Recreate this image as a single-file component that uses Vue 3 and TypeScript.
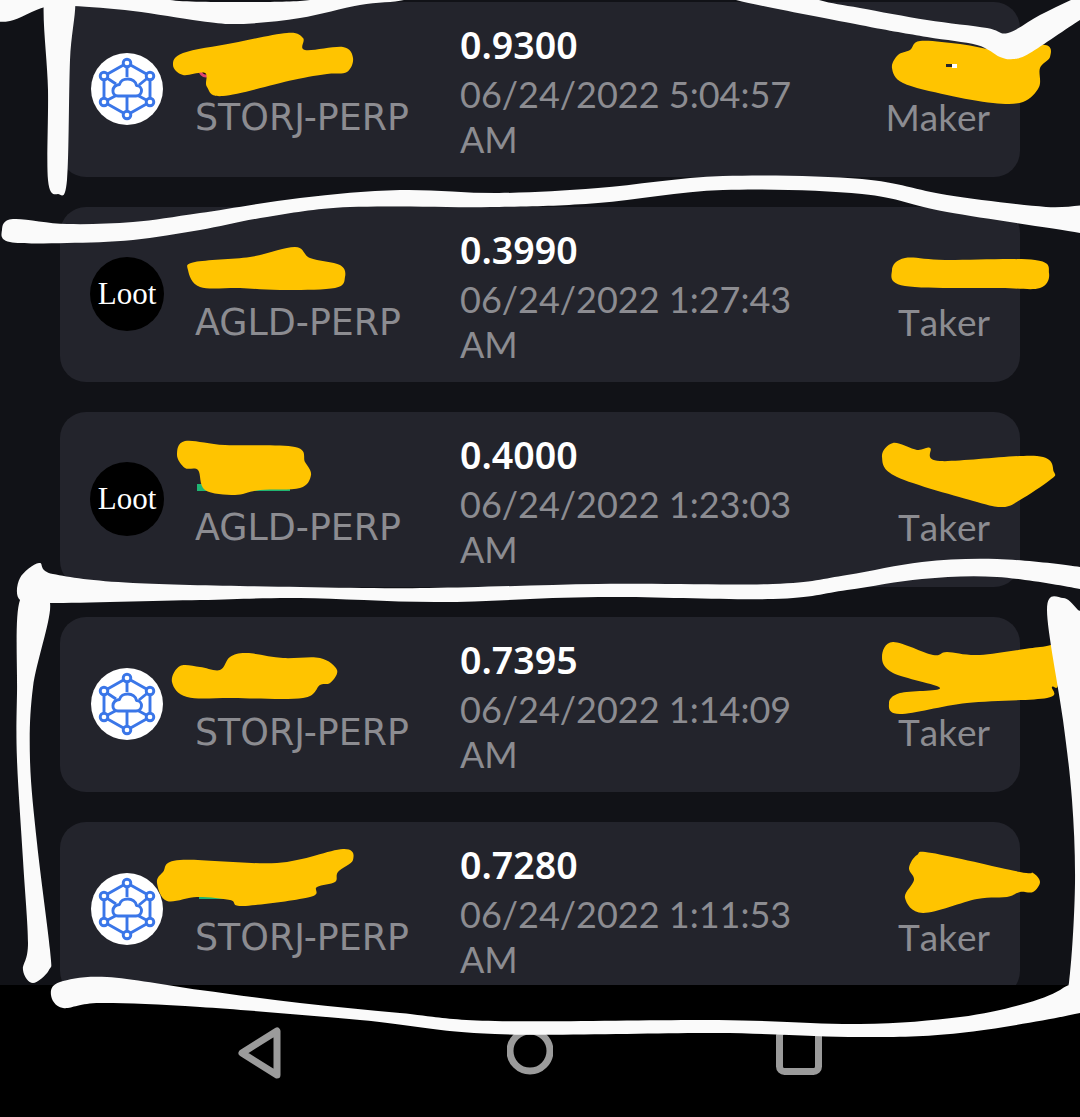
<script setup lang="ts">
type Pt = [number, number];

interface Trade {
  price: string;
  time: string;
  symbol: string;
  role: string;
  logo: 'storj' | 'loot';
}

const trades: Trade[] = [
  { price: '0.9300', time: '06/24/2022 5:04:57 AM', symbol: 'STORJ-PERP', role: 'Maker', logo: 'storj' },
  { price: '0.3990', time: '06/24/2022 1:27:43 AM', symbol: 'AGLD-PERP', role: 'Taker', logo: 'loot' },
  { price: '0.4000', time: '06/24/2022 1:23:03 AM', symbol: 'AGLD-PERP', role: 'Taker', logo: 'loot' },
  { price: '0.7395', time: '06/24/2022 1:14:09 AM', symbol: 'STORJ-PERP', role: 'Taker', logo: 'storj' },
  { price: '0.7280', time: '06/24/2022 1:11:53 AM', symbol: 'STORJ-PERP', role: 'Taker', logo: 'storj' },
];

const nodes: Pt[] = [[0, -26], [23, -13], [23, 13], [0, 26], [-23, 13], [-23, -13]];

// closed catmull-rom through the outline points
function smooth(pts: Pt[]): string {
  const n = pts.length;
  let d = `M${pts[0][0]} ${pts[0][1]}`;
  for (let i = 0; i < n; i++) {
    const p0 = pts[(i - 1 + n) % n];
    const p1 = pts[i];
    const p2 = pts[(i + 1) % n];
    const p3 = pts[(i + 2) % n];
    const c1x = p1[0] + (p2[0] - p0[0]) / 6;
    const c1y = p1[1] + (p2[1] - p0[1]) / 6;
    const c2x = p2[0] - (p3[0] - p1[0]) / 6;
    const c2y = p2[1] - (p3[1] - p1[1]) / 6;
    d += `C${c1x.toFixed(1)} ${c1y.toFixed(1)} ${c2x.toFixed(1)} ${c2y.toFixed(1)} ${p2[0]} ${p2[1]}`;
  }
  return d + 'Z';
}

const yellow: Pt[][] = [
  [[173, 65], [183, 53], [233, 43], [287, 33], [303, 38], [305, 50], [343, 47], [353, 58], [347, 72], [327, 74], [293, 80], [223, 96], [207, 87], [205, 73], [183, 75]],
  [[188, 270], [195, 262], [250, 257], [295, 247], [310, 258], [340, 265], [345, 277], [335, 288], [280, 290], [240, 288], [200, 287]],
  [[177, 455], [185, 441], [225, 445], [295, 447], [305, 462], [311, 475], [300, 488], [260, 490], [235, 495], [205, 490], [198, 470], [185, 468]],
  [[172, 682], [180, 666], [200, 667], [220, 670], [230, 657], [247, 653], [283, 658], [320, 658], [337, 670], [330, 683], [320, 685], [303, 698], [233, 698], [187, 697]],
  [[157, 883], [163, 872], [180, 860], [277, 863], [343, 849], [353, 860], [338, 872], [335, 882], [317, 887], [310, 897], [243, 906], [230, 900], [197, 897], [167, 901]],
  [[892, 68], [898, 55], [910, 50], [920, 41], [960, 44], [1000, 50], [1045, 45], [1050, 57], [1040, 68], [1039, 87], [1023, 102], [993, 103], [947, 95], [903, 83]],
  [[892, 270], [905, 258], [945, 260], [1035, 260], [1049, 273], [1040, 288], [1000, 288], [905, 286]],
  [[882, 457], [893, 443], [917, 450], [930, 448], [940, 461], [1037, 456], [1054, 472], [1050, 480], [1020, 500], [1003, 507], [977, 502], [897, 477]],
  [[882, 657], [893, 642], [933, 655], [947, 652], [980, 655], [1040, 647], [1060, 647], [1058, 685], [1052, 687], [1047, 698], [967, 703], [900, 714], [889, 703], [900, 693], [940, 688], [893, 673]],
  [[909, 868], [917, 855], [932, 853], [1020, 872], [1033, 873], [1040, 882], [1033, 892], [1020, 892], [1007, 897], [977, 899], [923, 913], [905, 898], [914, 880]],
];

const white: Pt[][] = [
  [[-10, -10], [165, -10], [170, 0], [240, 2], [310, 0], [315, -10], [420, -10], [404, 0], [360, 5], [300, 18], [240, 24], [200, 21], [133, 11], [73, 6], [45, 7], [10, 21], [-10, 17]],
  [[45, -5], [74, -5], [70, 60], [67, 180], [58, 194], [48, 180], [48, 90]],
  [[780, -15], [819, 0], [860, 8], [927, 20], [987, 28], [1008, 33], [1040, 15], [1075, -2], [1100, -15], [1100, 10], [1080, 20], [1030, 53], [1013, 59], [1000, 57], [977, 45], [927, 37], [860, 25], [736, 0], [700, -15]],
  [[2, 230], [13, 219], [67, 224], [133, 222], [200, 213], [300, 198], [400, 190], [499, 193], [598, 188], [723, 176], [862, 179], [947, 195], [1046, 207], [1100, 207], [1100, 240], [1080, 233], [947, 212], [862, 194], [723, 190], [598, 203], [499, 207], [350, 207], [267, 217], [200, 230], [133, 240], [67, 243], [10, 242]],
  [[20, 578], [39, 563], [53, 574], [133, 583], [300, 587], [429, 588], [598, 584], [773, 584], [847, 575], [922, 562], [997, 559], [1080, 567], [1100, 575], [1100, 597], [1080, 589], [997, 577], [922, 579], [847, 590], [773, 599], [598, 597], [439, 602], [300, 598], [200, 600], [50, 603], [20, 600]],
  [[20, 600], [17, 693], [17, 760], [23, 860], [28, 943], [23, 970], [33, 983], [49, 970], [50, 950], [37, 843], [30, 760], [33, 687], [50, 603]],
  [[51, 995], [60, 982], [107, 977], [200, 990], [300, 1003], [400, 1013], [495, 1021], [718, 1020], [860, 1024], [960, 1017], [1027, 1003], [1063, 988], [1070, 973], [1075, 883], [1072, 800], [1063, 720], [1047, 610], [1063, 598], [1078, 610], [1100, 640], [1110, 1000], [1080, 1013], [960, 1033], [860, 1037], [718, 1033], [495, 1034], [360, 1020], [200, 1007], [100, 1003], [63, 1008]],
];

const yellowPaths = yellow.map(smooth);
const whitePaths = white.map(smooth);
</script>

<template>
  <div class="screen">
    <div class="list">
      <div v-for="t in trades" :key="t.time" class="card">
        <div class="logo" :class="t.logo">
          <svg v-if="t.logo === 'storj'" viewBox="-36 -36 72 72" width="72" height="72">
            <g fill="none" stroke="#3a76e8" stroke-width="2.9" stroke-linejoin="round">
              <path d="M0 -26L23 -13V13L0 26L-23 13V-13Z" />
              <path d="M0 -26V-12M-23 -13L-11 -5M23 -13L12 -4M0 26V6M-23 13L-10 6M23 13L10 6" />
              <path fill="#fff" d="M-9 7H9C16 7 16.5 -3 9.5 -3.5C8 -12 -6 -12 -7.5 -4.5C-16 -3.5 -16 7 -9 7Z" />
              <circle v-for="(p, i) in nodes" :key="i" :cx="p[0]" :cy="p[1]" r="3.8" fill="#fff" />
            </g>
          </svg>
          <span v-else>Loot</span>
        </div>
        <div class="symbol">{{ t.symbol }}</div>
        <div class="info">
          <div class="price">{{ t.price }}</div>
          <div class="time">{{ t.time }}</div>
        </div>
        <div class="role">{{ t.role }}</div>
      </div>
    </div>

    <div class="navbar">
      <svg width="46" height="52" viewBox="0 0 46 52" fill="none" stroke="#9b9b9b" stroke-width="7" stroke-linejoin="round">
        <path d="M4 26L39 4V48Z" />
      </svg>
      <svg width="46" height="52" viewBox="0 0 46 52" fill="none" stroke="#9b9b9b" stroke-width="7">
        <circle cx="23" cy="24" r="20" />
      </svg>
      <svg width="46" height="52" viewBox="0 0 46 52" fill="none" stroke="#9b9b9b" stroke-width="7">
        <rect x="3.5" y="3.5" width="39" height="41" rx="5" />
      </svg>
    </div>

    <svg class="marks" viewBox="0 0 1080 1117" width="1080" height="1117">
      <circle cx="206" cy="70" r="6" fill="#111" stroke="#e0436e" stroke-width="3" />
      <rect x="197" y="484" width="93" height="7" fill="#1fb573" />
      <rect x="199" y="892" width="34" height="7" fill="#1fb573" />
      <path v-for="(d, i) in yellowPaths" :key="i" :d="d" fill="#ffc400" />
      <rect x="946" y="64" width="6" height="3" fill="#24252d" />
      <rect x="952" y="64" width="5" height="4" fill="#fff" />
      <path v-for="(d, i) in whitePaths" :key="'w' + i" :d="d" fill="#fafafa" />
    </svg>
  </div>
</template>

<style scoped>
.screen {
  position: relative;
  width: 1080px;
  height: 1117px;
  overflow: hidden;
  background: #000;
  font-family: Lato, "Open Sans", sans-serif;
}

.list {
  height: 985px;
  overflow: hidden;
  box-sizing: border-box;
  padding: 2px 60px 0;
  background: #111217;
  display: flex;
  flex-direction: column;
  gap: 30px;
}

.card {
  flex: none;
  height: 175px;
  box-sizing: border-box;
  padding: 0 30px 0 31px;
  background: #23242c;
  border-radius: 26px;
  display: flex;
  align-items: flex-start;
}

.logo {
  flex: none;
  width: 72px;
  height: 72px;
  margin-top: 51px;
  margin-right: 32px;
  border-radius: 50%;
  display: flex;
  align-items: center;
  justify-content: center;
}

.logo.storj {
  background: #fff;
}

.logo.loot {
  background: #000;
  box-shadow: 0 0 0 1px #000;
  color: #fff;
  font-family: "Liberation Serif", serif;
  font-size: 31px;
}

.symbol {
  flex: none;
  width: 265px;
  padding-top: 93px;
  line-height: 45px;
  font-family: "DejaVu Sans", sans-serif;
  font-size: 36.4px;
  color: #8c8c91;
}

.info {
  width: 340px;
  padding-top: 16px;
}

.price {
  line-height: 54px;
  font-family: "Noto Sans", sans-serif;
  font-size: 37.5px;
  font-weight: 600;
  color: #fff;
}

.time {
  line-height: 45px;
  font-size: 36px;
  color: #8c8c91;
}

.role {
  margin-left: auto;
  padding-top: 92px;
  line-height: 45px;
  font-size: 37px;
  font-kerning: none;
  color: #8c8c91;
}

.navbar {
  height: 132px;
  box-sizing: border-box;
  padding: 42px 20px 0 0;
  display: flex;
  justify-content: center;
  gap: 223px;
}

.marks {
  position: absolute;
  inset: 0;
}
</style>
